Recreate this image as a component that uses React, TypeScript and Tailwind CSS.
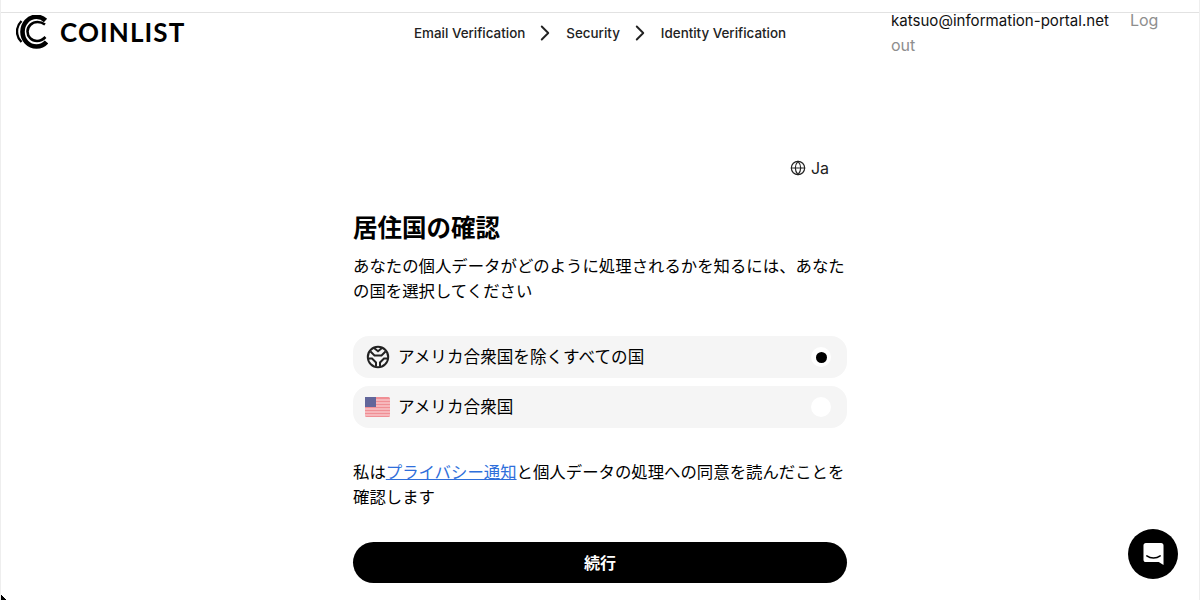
import { ChevronRight, Globe } from "lucide-react";

const fontStack = "font-['Inter','Noto_Sans_CJK_JP',sans-serif]";

function CoinlistLogo() {
  return (
    <svg width="32" height="34" viewBox="0 0 32 34" fill="none">
      <path d="M29.5 5.5C27 3 24 1.8 20.5 1.8C12.5 1.8 6.5 8.5 6.5 16.8C6.5 25 12.5 31.5 20.5 31.5C24.5 31.5 28 30 30.5 27" stroke="#000" strokeWidth="4.6" />
      <path d="M29 9.5C27 8 24.5 7 21.5 7C16 7 11.5 11.3 11.5 16.5C11.5 21.7 15.5 26 21 26C24 26 27 24.6 29.5 22" stroke="#000" strokeWidth="2.6" />
      <path d="M5.5 6C2.5 9 1 12.8 1 16.5C1 20.5 2.5 24 5.5 27" stroke="#000" strokeWidth="2.4" />
    </svg>
  );
}

function WorldIcon() {
  return (
    <svg width="24" height="24" viewBox="0 0 24 24" fill="none" stroke="#222" strokeWidth="2">
      <circle cx="12" cy="12" r="10.2" />
      <path d="M4.5 6.5L8.5 10.5H15.5L19.5 6.5" />
      <path d="M8 3L12 6.2L16 3" />
      <path d="M2.5 13.5H6L10 17.5V21.5" />
      <path d="M21.5 13.5H18L14 17.5V21.5" />
    </svg>
  );
}

function UsFlag() {
  return (
    <svg width="25" height="20" viewBox="0 0 25 20">
      <rect width="25" height="20" rx="1.5" fill="#f08f95" />
      <path d="M0 3H25M0 6H25M0 9H25M0 12H25M0 15H25M0 18H25" stroke="#fbdfe1" strokeWidth="1.2" />
      <rect width="11" height="10" fill="#62669a" />
    </svg>
  );
}

function ChatBubble() {
  return (
    <svg width="21" height="24" viewBox="0 0 22 24">
      <path d="M3 0.5H19C20.5 0.5 21.5 1.5 21.5 3V23.5L16.5 20.5H3C1.5 20.5 0.5 19.5 0.5 18V3C0.5 1.5 1.5 0.5 3 0.5Z" fill="#fff" />
      <path d="M4 14C8 17 14 17 18 14" stroke="#000" strokeWidth="1.6" fill="none" strokeLinecap="round" />
    </svg>
  );
}

export default function App() {
  return (
    <div className={`relative h-[600px] overflow-hidden bg-white pt-3 text-black ${fontStack} border-x border-[#eeeeee]`}>
      {/* Header */}
      <header className="flex items-start border-t border-[#e2e2e2]">
        <div className="flex w-[397px] items-center gap-[12px] pl-[15px] pt-[2px]">
          <CoinlistLogo />
          <span className="text-[26px] leading-[34px] font-bold tracking-[1.1px] font-['Lato',sans-serif]">COINLIST</span>
        </div>
        <nav className="flex w-[493px] items-center pl-[16px] pt-[7px] text-[13.4px] leading-5 font-medium text-[#222]">
          <span>Email Verification</span>
          <ChevronRight className="ml-[7px] mr-[8px] h-[26px] w-[26px]" strokeWidth={1.75} />
          <span>Security</span>
          <ChevronRight className="ml-[7px] mr-[8px] h-[26px] w-[26px]" strokeWidth={1.75} />
          <span>Identity Verification</span>
        </nav>
        <div className="-mt-[5px] w-[275px] text-[16px] leading-[25px] text-[#8e8e8e]">
          <span className="mr-[21px] text-[15.07px] text-[#111]">katsuo@information-portal.net</span>
          Log out
        </div>
      </header>

      {/* Form */}
      <main className="ml-[352px] mt-[98px] w-[494px]">
        <div className="flex items-center justify-end gap-[5px] pr-[18px] text-[16px] leading-6 text-[#222]">
          <Globe className="h-4 w-4" strokeWidth={1.75} />
          <span>Ja</span>
        </div>
        <h1 className="mt-[30px] text-[24.5px] leading-[36px] font-bold">居住国の確認</h1>
        <p className="mt-[8px] text-[16.4px] leading-[25px]">
          あなたの個人データがどのように処理されるかを知るには、あなたの国を選択してください
        </p>
        <div className="mt-[32px] flex flex-col gap-2">
          <div className="flex h-[42px] items-center rounded-2xl bg-[#f5f5f5] pl-[13px] pr-4">
            <WorldIcon />
            <span className="ml-[8px] flex-1 text-[16.6px]">アメリカ合衆国を除くすべての国</span>
            <span className="flex h-5 w-5 items-center justify-center rounded-full bg-white">
              <span className="h-[11px] w-[11px] rounded-full bg-black" />
            </span>
          </div>
          <div className="flex h-[42px] items-center rounded-2xl bg-[#f5f5f5] pl-[12px] pr-4">
            <UsFlag />
            <span className="ml-[8px] flex-1 text-[16.6px]">アメリカ合衆国</span>
            <span className="h-5 w-5 rounded-full bg-white" />
          </div>
        </div>
        <p className="mt-[32px] text-[16.4px] leading-[25px]">
          私は<a href="#privacy" className="text-[#2f6fdb] underline">プライバシー通知</a>と個人データの処理への同意を読んだことを確認します
        </p>
        <button className="mt-[32px] h-[41px] w-full rounded-full bg-black text-[16px] font-bold text-white">続行</button>
      </main>

      {/* Chat widget */}
      <div className="absolute left-[1127px] top-[529px] flex h-[50px] w-[50px] items-center justify-center rounded-full bg-black">
        <ChatBubble />
      </div>

      {/* Window corner */}
      <div className="absolute -left-px bottom-0 h-[7px] w-[7px] bg-[linear-gradient(45deg,#000_50%,transparent_50%)]" />
    </div>
  );
}
